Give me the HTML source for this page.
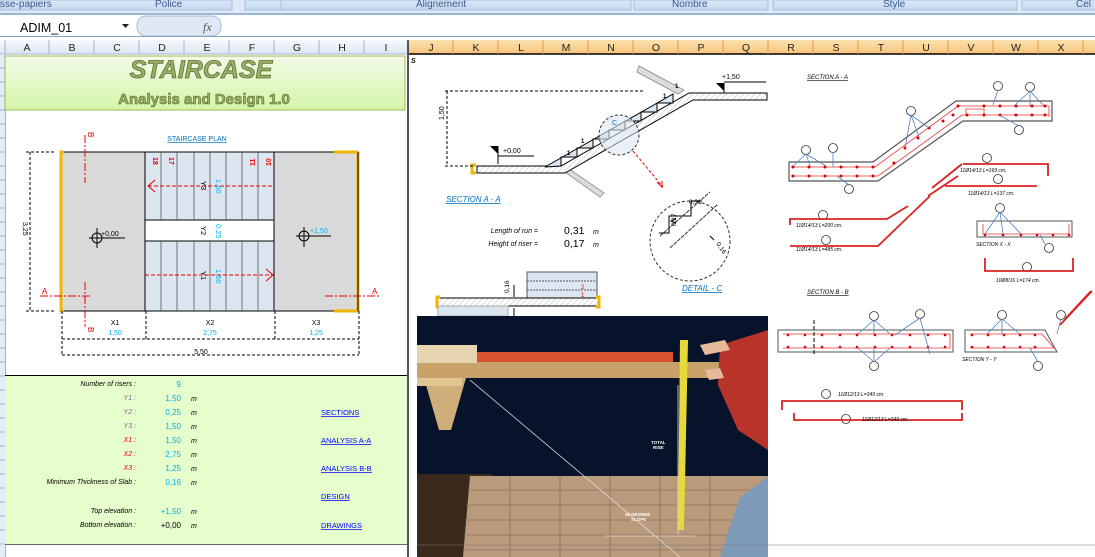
<!DOCTYPE html>
<html><head><meta charset="utf-8"><style>
*{margin:0;padding:0}
html,body{width:1095px;height:557px;overflow:hidden;background:#fff;font-family:"Liberation Sans",sans-serif}
svg{display:block;overflow:hidden}
</style></head><body>
<svg width="1095" height="557" viewBox="0 0 1095 557" xmlns="http://www.w3.org/2000/svg" font-family="Liberation Sans, sans-serif">
<defs>
<linearGradient id="rib" x1="0" y1="0" x2="0" y2="1"><stop offset="0" stop-color="#dbe8f7"/><stop offset="1" stop-color="#c3d7ef"/></linearGradient>
<linearGradient id="ttl" x1="0" y1="0" x2="0" y2="1"><stop offset="0" stop-color="#f3fbe9"/><stop offset="1" stop-color="#d4f5a8"/></linearGradient>
<linearGradient id="hdr" x1="0" y1="0" x2="0" y2="1"><stop offset="0" stop-color="#f6f9fd"/><stop offset="1" stop-color="#dbe5f2"/></linearGradient>
<linearGradient id="hdro" x1="0" y1="0" x2="0" y2="1"><stop offset="0" stop-color="#fbe1b0"/><stop offset="1" stop-color="#f6c47a"/></linearGradient>
<pattern id="hat" width="4" height="4" patternUnits="userSpaceOnUse" patternTransform="rotate(45)"><rect width="4" height="4" fill="#fff"/><line x1="0" y1="0" x2="0" y2="4" stroke="#bbb" stroke-width="1"/></pattern>
</defs>
<rect x="0" y="0" width="1095" height="14" fill="#dfe9f5"/>
<rect x="0" y="0" width="232" height="10" fill="url(#rib)" stroke="#a9c0dc"/>
<rect x="245" y="0" width="330" height="10" fill="url(#rib)" stroke="#a9c0dc"/>
<rect x="281" y="0" width="350" height="10" fill="url(#rib)" stroke="#a9c0dc"/>
<rect x="634" y="0" width="134" height="10" fill="url(#rib)" stroke="#a9c0dc"/>
<rect x="773" y="0" width="244" height="10" fill="url(#rib)" stroke="#a9c0dc"/>
<rect x="1022" y="0" width="80" height="10" fill="url(#rib)" stroke="#a9c0dc"/>
<g font-size="10" fill="#3b5b8c"><text x="0" y="7">sse-papiers</text><text x="155" y="7">Police</text><text x="416" y="7">Alignement</text><text x="672" y="7">Nombre</text><text x="883" y="7">Style</text><text x="1076" y="7">Cel</text></g>
<rect x="0" y="13" width="1095" height="2" fill="#9fb6d3"/>
<rect x="0" y="15" width="1095" height="22" fill="#fff"/>
<text x="20" y="32" font-size="12.5" fill="#000">ADIM_01</text>
<path d="M122 24h7l-3.5 4z" fill="#222"/>
<rect x="137" y="16" width="84" height="20" rx="9" fill="#dfe8f3" stroke="#a9bcd6"/>
<text x="203" y="31" font-size="12" font-style="italic" font-family="Liberation Serif,serif" fill="#555">fx</text>
<line x1="0" y1="36.5" x2="1095" y2="36.5" stroke="#8aa3c4"/>
<rect x="0" y="40" width="408" height="14" fill="url(#hdr)"/>
<rect x="408" y="40" width="687" height="14" fill="url(#hdro)"/>
<line x1="0" y1="54" x2="408" y2="54" stroke="#9eb6ce"/>
<line x1="408" y1="54" x2="1095" y2="54" stroke="#000" stroke-width="1.5"/>
<g font-size="10.5" fill="#222" text-anchor="middle">
<text x="27" y="51">A</text><text x="72" y="51">B</text><text x="117" y="51">C</text><text x="162" y="51">D</text><text x="207" y="51">E</text><text x="252" y="51">F</text><text x="297" y="51">G</text><text x="342" y="51">H</text><text x="386" y="51">I</text>
<text x="431" y="51">J</text><text x="476" y="51">K</text><text x="521" y="51">L</text><text x="566" y="51">M</text><text x="611" y="51">N</text><text x="656" y="51">O</text><text x="701" y="51">P</text><text x="746" y="51">Q</text><text x="791" y="51">R</text><text x="836" y="51">S</text><text x="881" y="51">T</text><text x="926" y="51">U</text><text x="971" y="51">V</text><text x="1016" y="51">W</text><text x="1061" y="51">X</text>
</g>
<g stroke="#9eb6ce"><path d="M5 40v14M49 40v14M94 40v14M139 40v14M184 40v14M229 40v14M274 40v14M319 40v14M364 40v14"/></g>
<g stroke="#e59a44"><path d="M453 40v14M498 40v14M543 40v14M588 40v14M633 40v14M678 40v14M723 40v14M768 40v14M813 40v14M858 40v14M903 40v14M948 40v14M993 40v14M1038 40v14M1083 40v14"/></g>
<rect x="0" y="55" width="5" height="502" fill="#e4ecf7"/>
<g stroke="#9eb6ce"><path d="M0 68h5M0 82h5M0 96h5M0 110h5M0 124h5M0 138h5M0 152h5M0 166h5M0 180h5M0 194h5M0 208h5M0 222h5M0 236h5M0 250h5M0 264h5M0 278h5M0 292h5M0 306h5M0 320h5M0 334h5M0 348h5M0 362h5M0 376h5M0 390h5M0 404h5M0 418h5M0 432h5M0 446h5M0 460h5M0 474h5M0 488h5M0 502h5M0 516h5M0 530h5M0 544h5"/></g>
<line x1="5.5" y1="55" x2="5.5" y2="557" stroke="#9eb6ce"/>
<rect x="407" y="40" width="2" height="517" fill="#555"/>
<rect x="5" y="56" width="400" height="54" fill="url(#ttl)" stroke="#9bbb59"/>
<text x="201" y="78" text-anchor="middle" font-size="25" font-weight="bold" font-style="italic" fill="#9aaf6a" stroke="#5b6e2c" stroke-width="0.8">STAIRCASE</text>
<text x="204" y="104" text-anchor="middle" font-size="15" font-weight="bold" fill="#9aaf6a" stroke="#5b6e2c" stroke-width="0.6">Analysis and Design 1.0</text>
<text x="197" y="141" text-anchor="middle" font-size="7" fill="#0070c0" text-decoration="underline">STAIRCASE PLAN</text>
<rect x="62" y="152" width="83" height="159" fill="#d9d9d9" stroke="#000"/>
<rect x="274" y="152" width="84" height="159" fill="#d9d9d9" stroke="#000"/>
<rect x="145" y="152" width="129" height="159" fill="#dce6f1" stroke="#000"/>
<rect x="145" y="220" width="129" height="21" fill="#fff" stroke="#000"/>
<g stroke="#555" stroke-width="0.8"><path d="M161 152v68M177 152v68M194 152v68M210 152v68M226 152v68M242 152v68M258 152v68M161 241v70M177 241v70M194 241v70M210 241v70M226 241v70M242 241v70M258 241v70"/></g>
<path d="M64 152h-3v159h3" fill="none" stroke="#f5b400" stroke-width="3"/>
<path d="M334 152h24M334 311h24M358 152v159" fill="none" stroke="#f5b400" stroke-width="3"/>
<line x1="358" y1="152" x2="358" y2="311" stroke="#000"/>
<g fill="#e00" font-size="7" font-weight="bold"><text transform="translate(153,157) rotate(90)">18</text><text transform="translate(169,157) rotate(90)">17</text><text transform="translate(255,166) rotate(-90)">11</text><text transform="translate(271,166) rotate(-90)">10</text></g>
<g stroke="#e00" stroke-dasharray="4 2" fill="none"><path d="M148 186H274M145 275H273"/></g>
<path d="M155 180l-7 6 7 6M266 269l7 6-7 6" fill="none" stroke="#e00"/>
<g font-size="7.5"><text transform="translate(201,181) rotate(90)">Y3</text><text transform="translate(216,179) rotate(90)" fill="#00b0f0">1,50</text><text transform="translate(201,226) rotate(90)">Y2</text><text transform="translate(216,224) rotate(90)" fill="#00b0f0">0,25</text><text transform="translate(201,271) rotate(90)">Y1</text><text transform="translate(216,269) rotate(90)" fill="#00b0f0">1,50</text></g>
<g stroke="#e00" stroke-dasharray="8 2 2 2" fill="none"><path d="M85 135v48M85 282v45M40 296h52M325 296h55"/></g>
<g fill="#e00" font-size="8"><text x="42" y="294">A</text><text x="372" y="294">A</text><text transform="translate(88,132) rotate(90)">B</text><text transform="translate(88,327) rotate(90)">B</text></g>
<g fill="none" stroke="#000"><circle cx="97" cy="238" r="5"/><path d="M89 238h36M97 228v20"/><circle cx="304" cy="236" r="5"/><path d="M296 236h35M304 227v20"/></g>
<text x="101" y="236" font-size="7">+0,00</text><text x="310" y="233" font-size="7" fill="#00b0f0">+1,50</text>
<g stroke="#000" stroke-dasharray="3 2" fill="none"><path d="M30 152v159M26 152h28M26 311h28M62 311v45M146 311v30M275 311v30M359 311v45M62 339h297M62 355h297"/></g>
<text transform="translate(23,222) rotate(90)" font-size="7">3,25</text>
<g font-size="7" text-anchor="middle"><text x="115" y="325">X1</text><text x="210" y="325">X2</text><text x="316" y="325">X3</text><text x="201" y="354">5,50</text></g>
<g font-size="7" text-anchor="middle" fill="#00b0f0"><text x="115" y="335">1,50</text><text x="210" y="335">2,75</text><text x="316" y="335">1,25</text></g>
<rect x="5" y="375" width="402" height="170" fill="#e6fdcc"/>
<line x1="5" y1="375.5" x2="407" y2="375.5" stroke="#000"/>
<line x1="5" y1="544.5" x2="407" y2="544.5" stroke="#666"/>
<g font-size="7" font-style="italic" text-anchor="end">
<text x="136" y="386">Number of risers :</text>
<text x="136" y="400" fill="#8064a2">Y1 :</text><text x="136" y="414" fill="#8064a2">Y2 :</text><text x="136" y="428" fill="#8064a2">Y3 :</text>
<text x="136" y="442" fill="#e00">X1 :</text><text x="136" y="456" fill="#e00">X2 :</text><text x="136" y="470" fill="#e00">X3 :</text>
<text x="136" y="484">Minimum Thickness of Slab :</text>
<text x="136" y="513">Top elevation :</text><text x="136" y="527">Bottom elevation :</text>
</g>
<g font-size="8" text-anchor="end" fill="#00b0f0">
<text x="181" y="387">9</text><text x="181" y="401">1,50</text><text x="181" y="415">0,25</text><text x="181" y="429">1,50</text><text x="181" y="443">1,50</text><text x="181" y="457">2,75</text><text x="181" y="471">1,25</text><text x="181" y="485">0,16</text><text x="181" y="514">+1,50</text><text x="181" y="528" fill="#000">+0,00</text>
</g>
<g font-size="7" font-style="italic"><text x="191" y="401">m</text><text x="191" y="415">m</text><text x="191" y="429">m</text><text x="191" y="443">m</text><text x="191" y="457">m</text><text x="191" y="471">m</text><text x="191" y="485">m</text><text x="191" y="514">m</text><text x="191" y="528">m</text></g>
<g font-size="7.5" fill="#00f" text-decoration="underline"><text x="321" y="415">SECTIONS</text><text x="321" y="443">ANALYSIS A-A</text><text x="321" y="471">ANALYSIS B-B</text><text x="321" y="499">DESIGN</text><text x="321" y="528">DRAWINGS</text></g>
<!-- section A-A -->
<text x="411" y="63" font-size="7" font-style="italic" font-weight="bold">S</text>
<path d="M565 172l35 25 4-4-35-24z" fill="#ddd" stroke="#999"/>
<path d="M639 66l45 24-6 4-41-22z" fill="#ddd" stroke="#999"/>
<path d="M477 166H561L689 93H767V100H693L565 173H477Z" fill="url(#hat)" stroke="#000"/>
<path d="M561 166v-9h16v-9h16v-9h16v-9h16v-9h16v-9h16v-9h16v-9l-128 73z" fill="#dce6f1" stroke="#000"/>
<circle cx="619" cy="135" r="20" fill="#dce6f1" fill-opacity="0.6" stroke="#333" stroke-dasharray="3 2"/>
<text x="612" y="125" font-size="7" fill="#0070c0">C</text>
<path d="M476 165h-4v8h4" fill="none" stroke="#f5b400" stroke-width="3"/>
<path d="M445 91h198M445 166h30M447 91v75" fill="none" stroke="#000" stroke-dasharray="3 2"/>
<text transform="translate(444,120) rotate(-90)" font-size="7">1,50</text>
<path d="M490 146l8 8v-8z M716 83l8 8v-8z"/><path d="M498 146v18M498 156h36M724 83v10M724 82h42" stroke="#000" fill="none"/>
<text x="503" y="153" font-size="7">+0,00</text><text x="722" y="79" font-size="7">+1,50</text>
<g font-size="6" font-weight="bold"><text x="567" y="155">1</text><text x="581" y="143">1</text><text x="663" y="98">1</text><text x="675" y="88">1</text></g>
<text x="446" y="202" font-size="8" font-style="italic" fill="#0070c0" text-decoration="underline">SECTION A - A</text>
<path d="M633 151l30 36" stroke="#e00" stroke-dasharray="3 2"/><path d="M657 182l5 5 0-6" fill="none" stroke="#e00"/>
<circle cx="690" cy="241" r="40" fill="none" stroke="#333" stroke-dasharray="3 2"/>
<path d="M659 233h10v-17h22v-15h11" fill="none" stroke="#000"/>
<path d="M660 236l50-44M670 248l48-44" stroke="#333" stroke-dasharray="4 1"/>
<path d="M676 219l-5 2 5 2M710 236l4 4" stroke="#000" fill="none"/>
<g font-size="6.5"><text x="689" y="204">0,31</text><text transform="translate(676,226) rotate(-90)">0,17</text><text transform="translate(716,244) rotate(55)">0,16</text></g>
<text x="682" y="291" font-size="8" font-style="italic" fill="#0070c0" text-decoration="underline">DETAIL - C</text>
<g font-size="7" font-style="italic" text-anchor="end"><text x="538" y="233">Length of run =</text><text x="538" y="246">Height of riser =</text></g>
<g font-size="10.5"><text x="564" y="234">0,31</text><text x="564" y="247">0,17</text></g>
<g font-size="7" font-style="italic"><text x="593" y="234">m</text><text x="593" y="247">m</text></g>
<rect x="527" y="272" width="70" height="26" fill="#dce6f1" stroke="#555"/>
<path d="M527 281h70M527 290h70" stroke="#555" stroke-dasharray="2 1"/>
<text x="581" y="289" font-size="6" fill="#e00">2</text><text x="581" y="297" font-size="6" fill="#e00">1</text>
<rect x="438" y="298" width="161" height="8" fill="url(#hat)" stroke="#000"/>
<path d="M440 297h-3v10h3M596 297h3v10h-3" fill="none" stroke="#f5b400" stroke-width="3"/>
<rect x="438" y="306" width="70" height="10" fill="#dce6f1" stroke="#aaa"/>
<text transform="translate(509,293) rotate(-90)" font-size="6.5">0,16</text>
<path d="M514 285v12M514 308v8" stroke="#000"/>
<!-- photo -->
<rect x="417" y="316" width="351" height="241" fill="#06132a"/>
<rect x="417" y="474" width="75" height="83" fill="#3a2a1e"/>
<path d="M470 476h298v81H463z" fill="#b99a7c"/>
<g stroke="#8d6f55" stroke-width="0.8"><path d="M468 490h300M466 505h302M465 520h303M464 535h304M463 550h305M510 476v81M560 476v81M610 476v81M660 476v81M710 476v81"/></g>
<rect x="417" y="362" width="318" height="16" fill="#c9a26a"/>
<rect x="428" y="352" width="245" height="10" fill="#d6532e"/>
<rect x="417" y="345" width="60" height="18" fill="#e6d3b0"/>
<path d="M424 378h42l-15 52h-12z" fill="#cfae7a"/>
<rect x="417" y="378" width="45" height="8" fill="#e1c593"/>
<path d="M680 340l8 0-4 190h-6z" fill="#e8d93a"/>
<path d="M720 345l48-15v120l-30-20-20-45z" fill="#b8332a"/>
<path d="M700 345l25-5 5 10-25 5zM705 370l15-2 4 10-15 2z" fill="#e7b99a"/>
<path d="M720 557l20-60 28-20v80z" fill="#7d9ab8"/>
<path d="M470 380l210 177" stroke="#ddd" stroke-width="0.8"/>
<path d="M678 385v150M605 536h90" stroke="#ddd" stroke-width="0.8"/>
<g font-size="4.5" fill="#fff" font-weight="bold"><text x="651" y="444">TOTAL</text><text x="653" y="449">RISE</text><text x="625" y="516">45 DEGREE</text><text x="631" y="521">SLOPE</text></g>
<line x1="417" y1="545" x2="1095" y2="545" stroke="#777" stroke-width="0.6"/>
<!-- right rebar drawings -->
<g font-size="6" font-style="italic"><text x="807" y="79" text-decoration="underline">SECTION A - A</text><text x="807" y="294" text-decoration="underline">SECTION B - B</text></g>
<path d="M789 162H873L956 101H1052V121H963L878 181H789Z" fill="none" stroke="#555" stroke-width="1.2"/>
<path d="M791 167H875L958 106H1049V117M791 176H878L962 115H1049" fill="none" stroke="#e33" stroke-width="0.8"/>
<g fill="#d00"><circle cx="793" cy="167" r="1.5"/><circle cx="809" cy="167" r="1.5"/><circle cx="825" cy="167" r="1.5"/><circle cx="841" cy="167" r="1.5"/><circle cx="857" cy="167" r="1.5"/><circle cx="873" cy="167" r="1.5"/><circle cx="793" cy="176" r="1.5"/><circle cx="809" cy="176" r="1.5"/><circle cx="825" cy="176" r="1.5"/><circle cx="841" cy="176" r="1.5"/><circle cx="857" cy="176" r="1.5"/><circle cx="873" cy="176" r="1.5"/><circle cx="958" cy="106" r="1.5"/><circle cx="984" cy="106" r="1.5"/><circle cx="1000" cy="106" r="1.5"/><circle cx="1016" cy="106" r="1.5"/><circle cx="1032" cy="106" r="1.5"/><circle cx="1045" cy="106" r="1.5"/><circle cx="967" cy="115" r="1.5"/><circle cx="984" cy="115" r="1.5"/><circle cx="1000" cy="115" r="1.5"/><circle cx="1016" cy="115" r="1.5"/><circle cx="1032" cy="115" r="1.5"/><circle cx="1045" cy="115" r="1.5"/><circle cx="894" cy="163" r="1.5"/><circle cx="905" cy="148" r="1.5"/><circle cx="918" cy="138" r="1.5"/><circle cx="929" cy="128" r="1.5"/><circle cx="943" cy="121" r="1.5"/><circle cx="953" cy="115" r="1.5"/></g>
<path d="M966 114v-5h18v5" fill="none" stroke="#e33" stroke-width="0.8"/>
<g fill="#fff" stroke="#333" stroke-width="0.8"><circle cx="806" cy="150" r="4.5"/><circle cx="833" cy="148" r="4.5"/><circle cx="849" cy="189" r="4.5"/><circle cx="911" cy="111" r="4.5"/><circle cx="998" cy="86" r="4.5"/><circle cx="1030" cy="87" r="4.5"/><circle cx="1019" cy="130" r="4.5"/><circle cx="987" cy="158" r="4.5"/><circle cx="998" cy="179" r="4.5"/><circle cx="823" cy="215" r="4.5"/><circle cx="826" cy="240" r="4.5"/><circle cx="1000" cy="208" r="4.5"/><circle cx="1049" cy="248" r="4.5"/><circle cx="1027" cy="267" r="4.5"/><circle cx="874" cy="316" r="4.5"/><circle cx="920" cy="314" r="4.5"/><circle cx="874" cy="366" r="4.5"/><circle cx="1002" cy="315" r="4.5"/><circle cx="1061" cy="315" r="4.5"/><circle cx="1038" cy="366" r="4.5"/><circle cx="826" cy="394" r="4.5"/><circle cx="846" cy="419" r="4.5"/></g>
<g stroke="#4f81bd" stroke-width="0.8" fill="none"><path d="M806 154l-13 12M806 154l4 12M806 154l20 12M833 152v15M849 185l-12-9M911 115l-6 33M911 115l8 22M911 115l18 13M998 90l-5 15M1030 91l-16 15M1030 91l0 15M1030 91l14 15M1019 126l-20-11"/></g>
<g stroke="#d22" stroke-width="1.8" fill="none">
<path d="M963 164h85v12"/><path d="M932 188l30-24"/><path d="M945 186h92"/><path d="M928 196l30-20"/>
<path d="M790 225v-6h97l21-13"/><path d="M790 246h88l52-50"/>
<path d="M985 258v13h88v-13"/><path d="M782 410v-9h180v9"/><path d="M794 413v7h168v-7"/>
<path d="M1066 318l25-27M1060 325l32-34"/>
</g>
<rect x="977" y="221" width="95" height="16" fill="none" stroke="#555"/>
<path d="M983 224v10h86v-10" fill="none" stroke="#e33" stroke-width="0.8"/>
<g fill="#d00"><circle cx="985" cy="235" r="1.3"/><circle cx="1003" cy="235" r="1.3"/><circle cx="1021" cy="235" r="1.3"/><circle cx="1037" cy="235" r="1.3"/><circle cx="1053" cy="235" r="1.3"/><circle cx="1069" cy="235" r="1.3"/></g>
<g stroke="#4f81bd" stroke-width="0.8" fill="none"><path d="M1000 212l-15 22M1000 212l3 22M1000 212l21 22M1045 244l-5-9"/></g>
<rect x="778" y="330" width="175" height="22" fill="none" stroke="#555"/>
<path d="M783 334h167v14H783" fill="none" stroke="#e33" stroke-width="0.8"/>
<path d="M965 330h80l12 22h-92z" fill="none" stroke="#555"/>
<path d="M970 334h72l12 14h-84" fill="none" stroke="#e33" stroke-width="0.8"/>
<g fill="#d00"><circle cx="788" cy="335" r="1.3"/><circle cx="805" cy="335" r="1.3"/><circle cx="822" cy="335" r="1.3"/><circle cx="840" cy="335" r="1.3"/><circle cx="857" cy="335" r="1.3"/><circle cx="875" cy="335" r="1.3"/><circle cx="892" cy="335" r="1.3"/><circle cx="910" cy="335" r="1.3"/><circle cx="928" cy="335" r="1.3"/><circle cx="945" cy="335" r="1.3"/><circle cx="788" cy="347" r="1.3"/><circle cx="805" cy="347" r="1.3"/><circle cx="822" cy="347" r="1.3"/><circle cx="840" cy="347" r="1.3"/><circle cx="857" cy="347" r="1.3"/><circle cx="875" cy="347" r="1.3"/><circle cx="892" cy="347" r="1.3"/><circle cx="910" cy="347" r="1.3"/><circle cx="928" cy="347" r="1.3"/><circle cx="945" cy="347" r="1.3"/><circle cx="972" cy="335" r="1.3"/><circle cx="988" cy="335" r="1.3"/><circle cx="1004" cy="335" r="1.3"/><circle cx="1020" cy="335" r="1.3"/><circle cx="1035" cy="335" r="1.3"/><circle cx="972" cy="347" r="1.3"/><circle cx="988" cy="347" r="1.3"/><circle cx="1004" cy="347" r="1.3"/><circle cx="1020" cy="347" r="1.3"/><circle cx="1035" cy="347" r="1.3"/></g>
<g stroke="#4f81bd" stroke-width="0.8" fill="none"><path d="M874 320l-16 14M874 320l0 14M874 320l16 14M874 362l-16-14M874 362l0-14M874 362l16-14M920 318l-25 17M920 318l10 36M1002 319l-15 15M1002 319l0 15M1002 319l18 15M1061 319l-4 15M1038 362l-8-14"/></g>
<path d="M814 320v34" stroke="#000" stroke-dasharray="4 2"/>
<g font-size="5" font-style="italic"><text x="960" y="172">11Ø14/13  L=169 cm.</text><text x="968" y="195">11Ø14/13  L=137 cm.</text><text x="796" y="227">11Ø14/13  L=200 cm.</text><text x="796" y="251">11Ø14/13  L=485 cm.</text><text x="976" y="246">SECTION X - X</text><text x="996" y="282">10Ø8/16  L=174 cm.</text><text x="962" y="361">SECTION Y - Y</text><text x="838" y="396">11Ø12/13  L=349 cm.</text><text x="862" y="421">11Ø12/13  L=349 cm.</text></g>
</svg>
</body></html>
